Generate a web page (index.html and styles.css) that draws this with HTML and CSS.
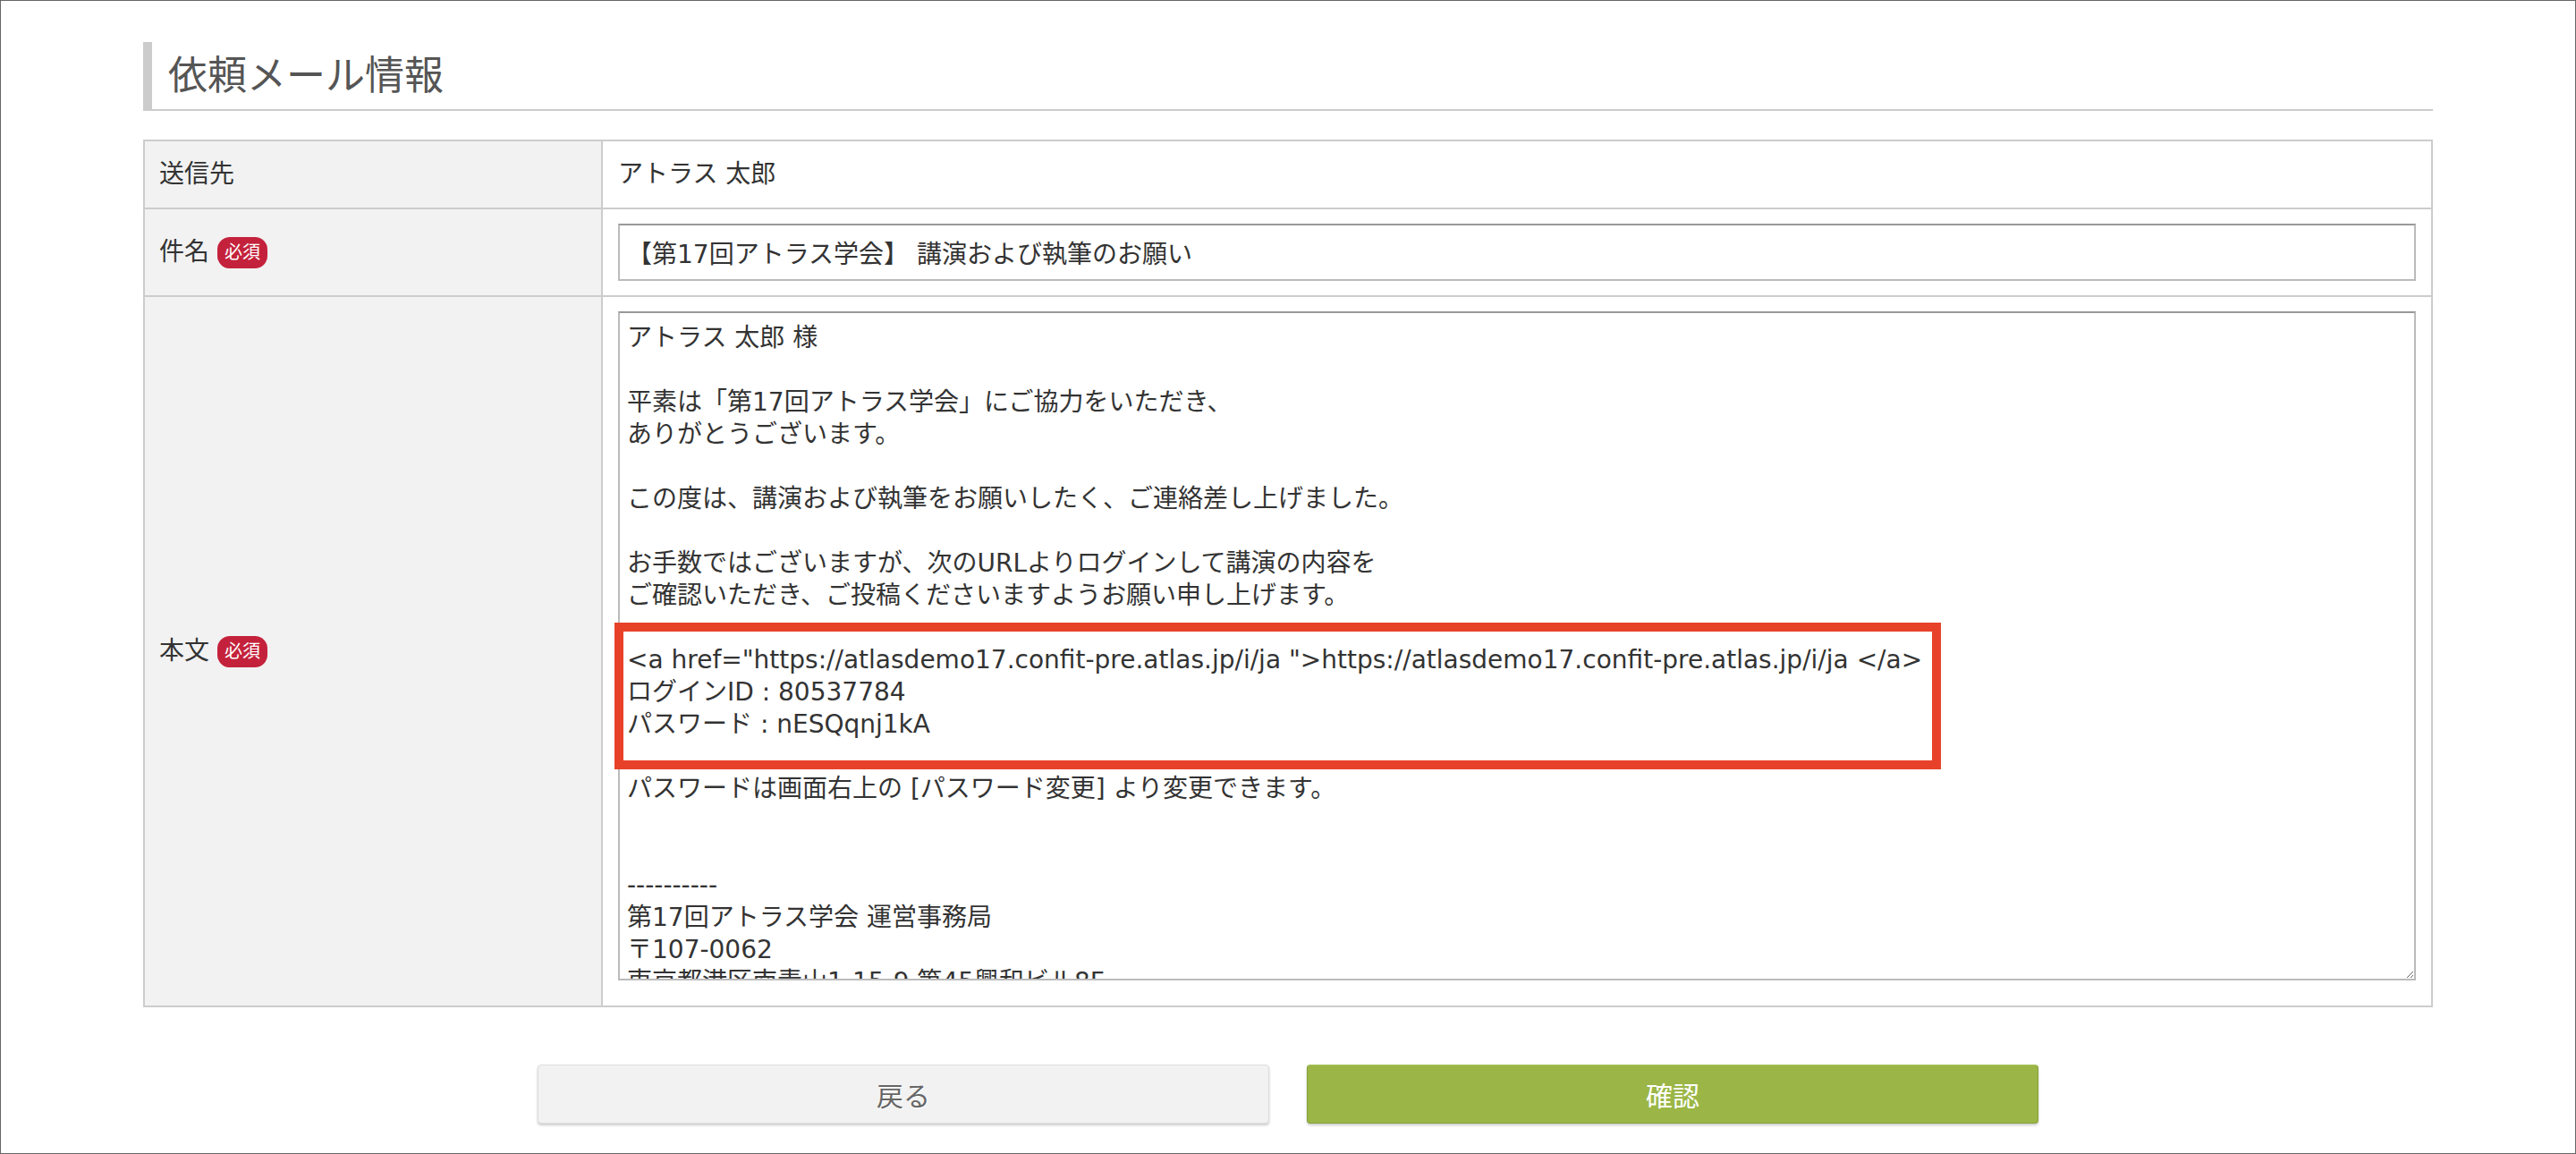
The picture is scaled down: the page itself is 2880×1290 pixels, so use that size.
FILE: index.html
```html
<!DOCTYPE html>
<html lang="ja">
<head>
    <meta charset="UTF-8">
    <meta name="viewport" content="width=device-width, initial-scale=1.0">
    <title>依頼メール情報</title>
    <link rel="stylesheet" href="styles.css">
</head>
<body>
    <div class="page">
        <div class="container">
            <h2 class="section-title">依頼メール情報</h2>

            <div class="form-table">
                <div class="form-label">送信先</div>
                <div class="form-value">アトラス 太郎</div>

                <div class="form-label">件名<span class="required">必須</span></div>
                <div class="form-value">
                    <input type="text" class="text-input" value="【第17回アトラス学会】 講演および執筆のお願い">
                </div>

                <div class="form-label">本文<span class="required">必須</span></div>
                <div class="form-value">
                    <div class="body-wrap">
                        <textarea class="body-input">アトラス 太郎 様

平素は「第17回アトラス学会」にご協力をいただき、
ありがとうございます。

この度は、講演および執筆をお願いしたく、ご連絡差し上げました。

お手数ではございますが、次のURLよりログインして講演の内容を
ご確認いただき、ご投稿くださいますようお願い申し上げます。

&lt;a href="https://atlasdemo17.confit-pre.atlas.jp/i/ja "&gt;https://atlasdemo17.confit-pre.atlas.jp/i/ja &lt;/a&gt;
ログインID : 80537784
パスワード : nESQqnj1kA

パスワードは画面右上の [パスワード変更] より変更できます。


----------
第17回アトラス学会 運営事務局
〒107-0062
東京都港区南青山1-15-9 第45興和ビル8F
TEL : 03-0000-0000</textarea>
                        <div class="highlight-box"></div>
                    </div>
                </div>
            </div>

            <div class="actions">
                <button type="button" class="btn btn-back">戻る</button>
                <button type="button" class="btn btn-confirm">確認</button>
            </div>
        </div>
    </div>
</body>
</html>
```

FILE: styles.css
```css
:root {
    --border-color: #cccccc;
    --label-bg: #f2f2f2;
    --text-color: #333333;
    --required-color: #c4223c;
    --mark-color: #e8412a; /* annotation box */
    --confirm-color: #9bb646;
}

* {
    margin: 0;
    padding: 0;
    box-sizing: border-box;
}

body {
    background-color: #fff;
    font-family: "DejaVu Sans", "Noto Sans CJK JP", sans-serif;
    color: var(--text-color);
}

.page {
    height: 1290px;
    border: 1px solid #666;
    padding-top: 46px;
    overflow: hidden;
}

.container {
    width: 2560px;
    margin: 0 auto;
}

.section-title {
    font-size: 44px;
    font-weight: normal;
    color: #555;
    line-height: 75px;
    padding-left: 18px;
    border-left: 10px solid var(--border-color);
    border-bottom: 2px solid var(--border-color);
}

.form-table {
    display: grid;
    grid-template-columns: 512px 1fr;
    margin-top: 32px;
    border-top: 2px solid var(--border-color);
    border-left: 2px solid var(--border-color);
}

.form-label,
.form-value {
    border-right: 2px solid var(--border-color);
    border-bottom: 2px solid var(--border-color);
    font-size: 28px;
    line-height: 42px;
}

.form-label {
    display: flex;
    align-items: center;
    padding: 16px;
    background-color: var(--label-bg);
}

.form-value {
    padding: 16px 17px;
}

.required {
    display: inline-block;
    margin-left: 9px;
    padding: 0 8px;
    border-radius: 14px;
    background-color: var(--required-color);
    color: #fff;
    font-size: 20px;
    line-height: 35px;
}

.text-input,
.body-input {
    display: block;
    width: 100%;
    border: 2px solid #bbb;
    border-top-color: #999;
    font-family: inherit;
    font-size: 28px;
    color: var(--text-color);
    background-color: #fff;
}

.text-input {
    height: 64px;
    padding: 0 8px;
}

.body-wrap {
    position: relative;
}

.body-input {
    height: 748px;
    margin-bottom: 12px;
    padding: 10px 8px;
    line-height: 36px;
    overflow: hidden;
    resize: both;
}

.highlight-box {
    position: absolute;
    left: -4px;
    top: 348px;
    width: 1483px;
    height: 164px;
    border: 10px solid var(--mark-color);
    pointer-events: none;
}

.actions {
    display: flex;
    justify-content: center;
    gap: 42px;
    margin-top: 64px;
}

.btn {
    width: 818px;
    height: 66px;
    border-radius: 4px;
    font-family: inherit;
    font-size: 30px;
    cursor: pointer;
}

.btn-back {
    background-color: #f2f2f2;
    border: 1px solid #ddd;
    color: #666;
    text-shadow: 1px 1px 0 #fff;
    box-shadow: 0 2px 3px rgba(0, 0, 0, 0.2);
}

.btn-confirm {
    background-color: var(--confirm-color);
    border: 1px solid #87a23a;
    border-top-color: #a9c35c;
    color: #fff;
    box-shadow: 0 2px 3px rgba(0, 0, 0, 0.2);
}
```
